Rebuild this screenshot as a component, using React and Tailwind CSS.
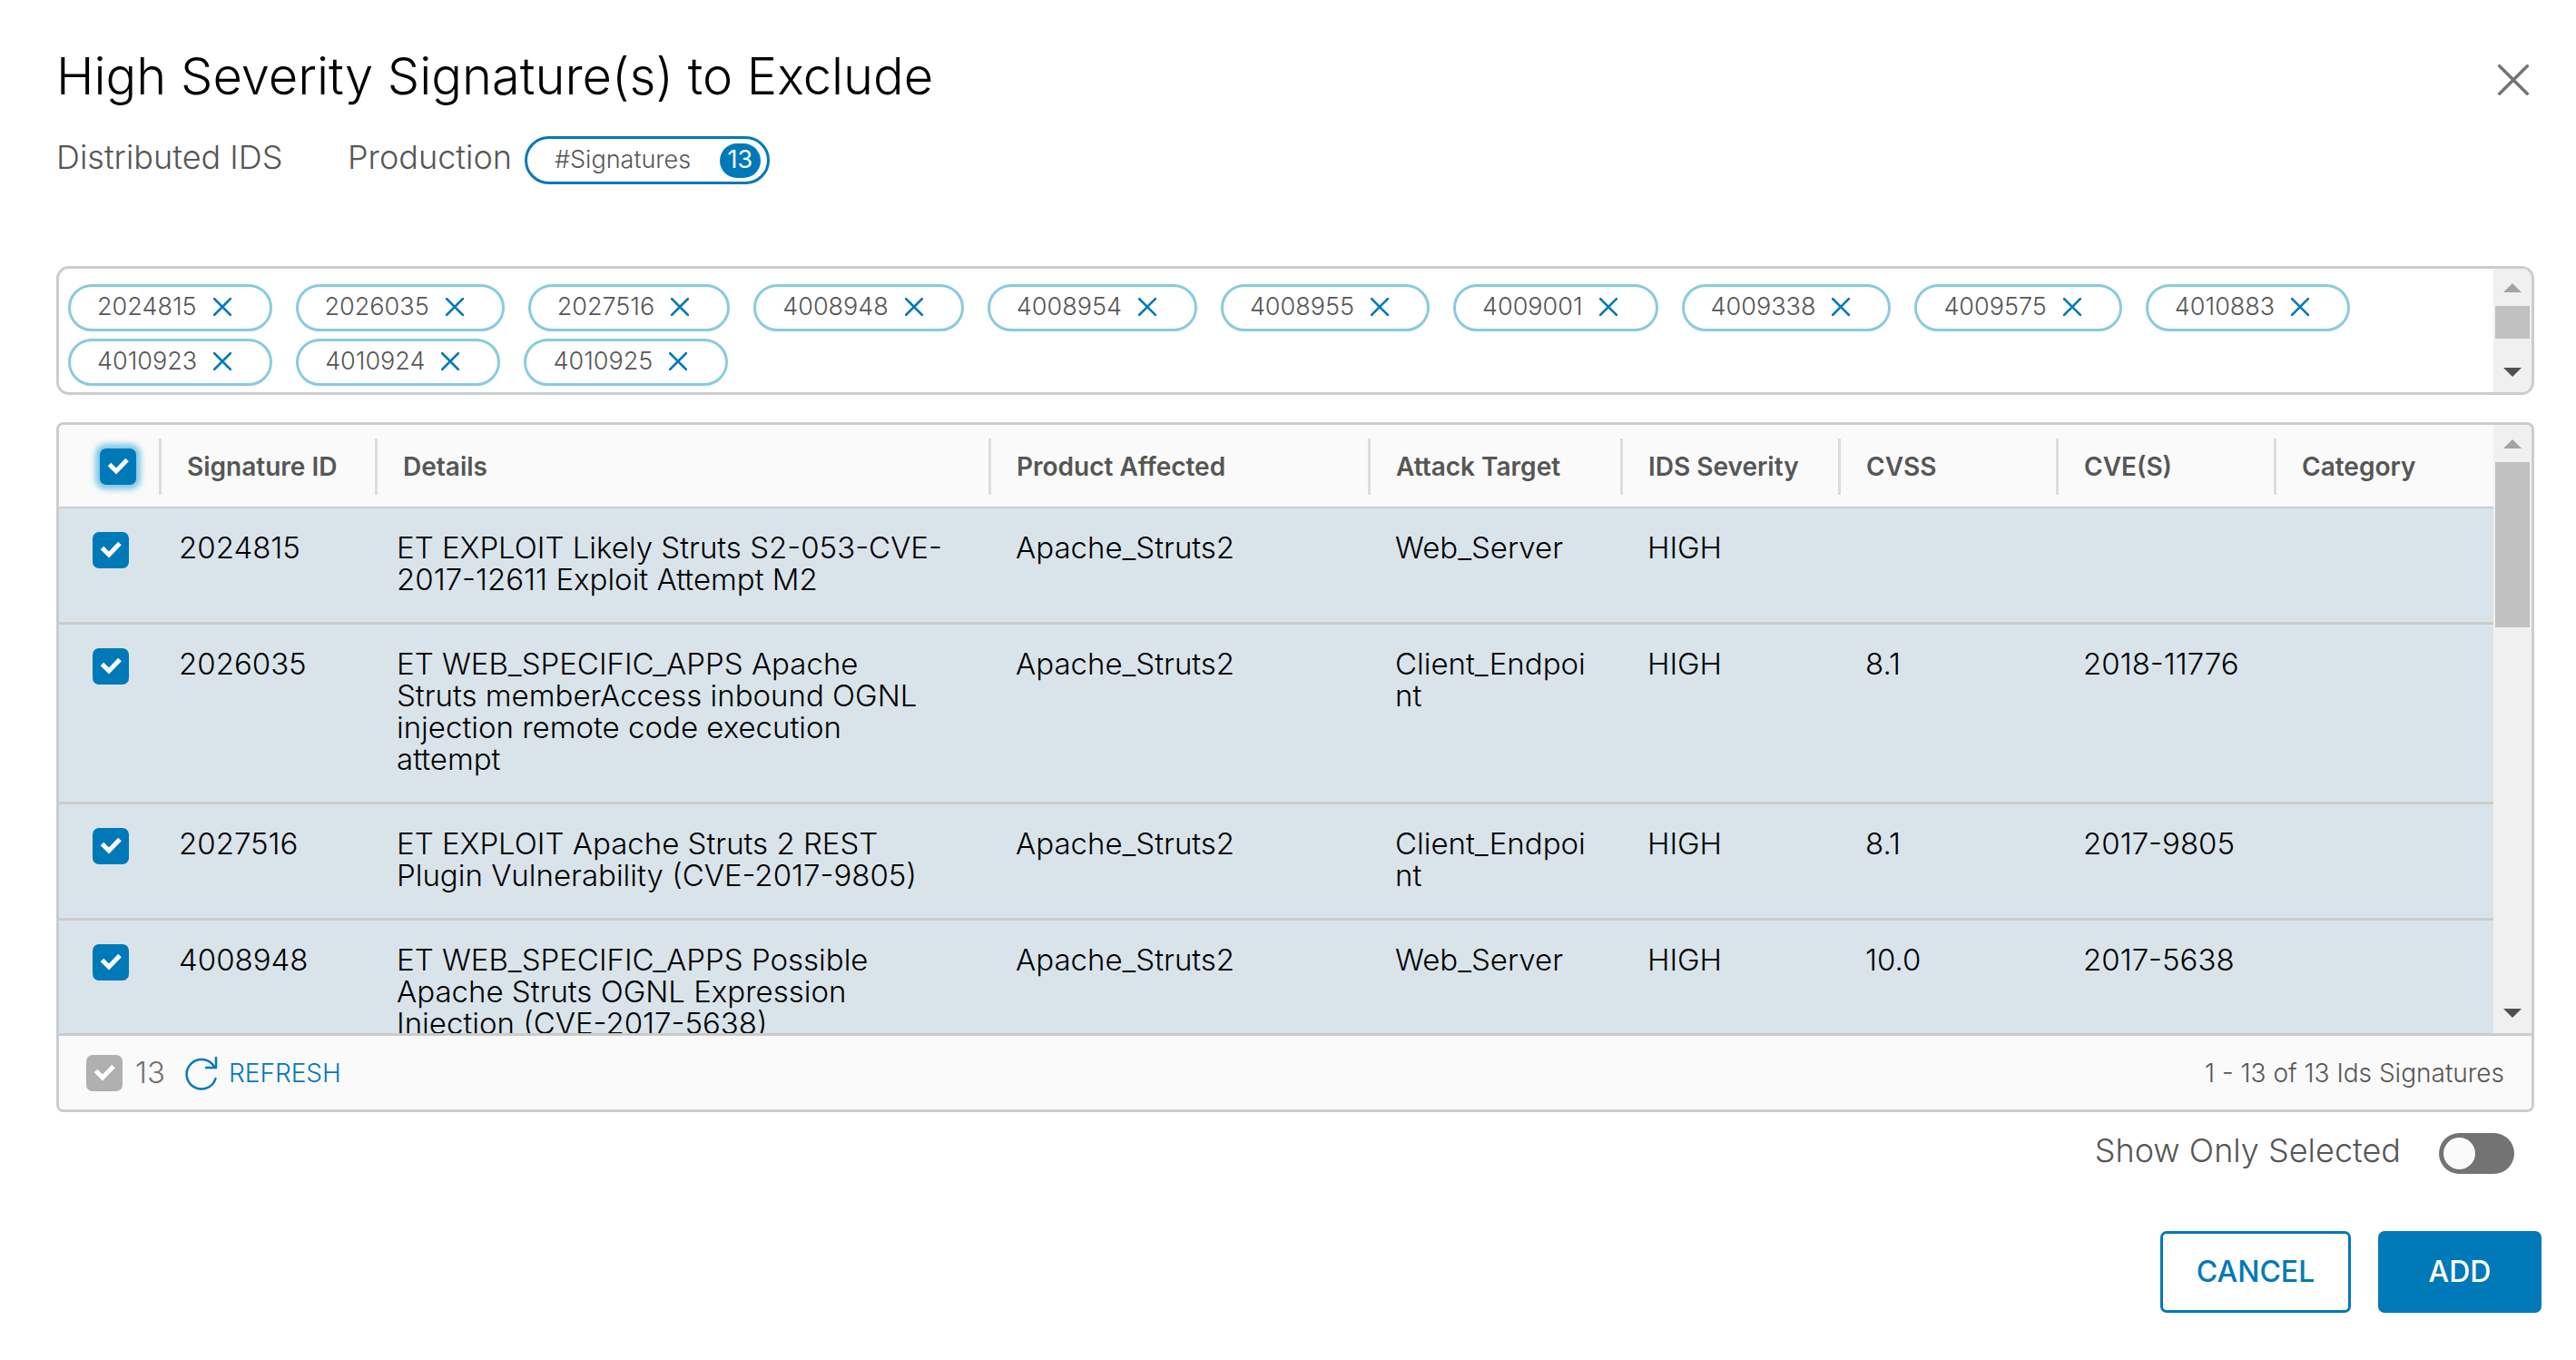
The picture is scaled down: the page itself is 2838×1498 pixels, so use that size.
import React from "react";

const chips = [
  "2024815", "2026035", "2027516", "4008948", "4008954", "4008955", "4009001",
  "4009338", "4009575", "4010883", "4010923", "4010924", "4010925",
];

const columns = [
  "Signature ID", "Details", "Product Affected", "Attack Target",
  "IDS Severity", "CVSS", "CVE(S)", "Category",
];

const rows = [
  {
    id: "2024815",
    details: "ET EXPLOIT Likely Struts S2-053-CVE-\n2017-12611 Exploit Attempt M2",
    product: "Apache_Struts2", target: "Web_Server", severity: "HIGH", cvss: "", cve: "",
  },
  {
    id: "2026035",
    details: "ET WEB_SPECIFIC_APPS Apache\nStruts memberAccess inbound OGNL\ninjection remote code execution\nattempt",
    product: "Apache_Struts2", target: "Client_Endpoi\nnt", severity: "HIGH", cvss: "8.1", cve: "2018-11776",
  },
  {
    id: "2027516",
    details: "ET EXPLOIT Apache Struts 2 REST\nPlugin Vulnerability (CVE-2017-9805)",
    product: "Apache_Struts2", target: "Client_Endpoi\nnt", severity: "HIGH", cvss: "8.1", cve: "2017-9805",
  },
  {
    id: "4008948",
    details: "ET WEB_SPECIFIC_APPS Possible\nApache Struts OGNL Expression\nInjection (CVE-2017-5638)",
    product: "Apache_Struts2", target: "Web_Server", severity: "HIGH", cvss: "10.0", cve: "2017-5638",
  },
];

function Cross({ className, strokeWidth }) {
  return (
    <svg viewBox="0 0 20 20" className={className} fill="none" stroke="currentColor" strokeWidth={strokeWidth} strokeLinecap="round" aria-hidden="true">
      <path d="M1 1 19 19M19 1 1 19" />
    </svg>
  );
}

function Checkbox({ label, focused, disabled }) {
  return (
    <span className="relative block size-10">
      <input
        type="checkbox"
        defaultChecked
        disabled={disabled}
        aria-label={label}
        className={
          "block size-10 appearance-none rounded-[7px] " +
          (disabled ? "bg-[#b0b0b0]" : "bg-[#0079b8]") +
          (focused ? " shadow-[0_0_6px_5px_#7cc6e6]" : "")
        }
      />
      <svg viewBox="0 0 40 40" className="pointer-events-none absolute inset-0 size-10" fill="none" stroke="#fff" strokeWidth="5" aria-hidden="true">
        <path d="M10.500 17.500 18 25 30 12.500" />
      </svg>
    </span>
  );
}

function Scrollbar({ thumb }) {
  return (
    <div className="flex w-[42px] shrink-0 flex-col items-center bg-[#f0f0f0]" aria-hidden="true">
      <div className="flex h-[41px] items-center justify-center">
        <svg viewBox="0 0 20 10" className="h-[10px] w-5 fill-[#a3a3a3]"><path d="M0 10 10 0 20 10z" /></svg>
      </div>
      <div className={"w-[38px] bg-[#c1c1c1] " + thumb} />
      <div className="mt-auto flex h-[45px] items-center justify-center">
        <svg viewBox="0 0 20 10" className="h-[10px] w-5 fill-[#505050]"><path d="M0 0 10 10 20 0z" /></svg>
      </div>
    </div>
  );
}

export default function App() {
  return (
    <main className="min-h-screen bg-white pt-[51px] pr-[38px] pb-12 pl-[62px] font-['Inter',sans-serif] text-[#565656]">
      <header className="flex items-start justify-between pr-[14px]">
        <h1 className="text-[56px] leading-[66px] font-light text-black">High Severity Signature(s) to Exclude</h1>
        <button type="button" aria-label="Close" className="mt-5 text-[#737373]">
          <Cross className="size-[34px]" strokeWidth="2" />
        </button>
      </header>

      <div className="mt-[33px] flex h-[53px] items-center text-[36px] font-light">
        <span className="w-[321px] pb-2">Distributed IDS</span>
        <span className="mr-[14px] pb-2">Production</span>
        <span className="flex h-[53px] w-[270px] items-center justify-between rounded-full border-3 border-[#0079b8] pr-[7px] pl-[30px] text-[27px]">
          #Signatures
          <span className="flex h-[38px] w-[45px] items-center justify-center rounded-full bg-[#0079b8] font-normal text-white">13</span>
        </span>
      </div>

      <section aria-label="Selected signatures" className="mt-[90px] mr-2 flex h-[142px] overflow-hidden rounded-[14px] border-3 border-[#cccccc]">
        <ul className="flex min-w-0 flex-1 flex-wrap content-start gap-x-[26px] gap-y-2 px-[10px] pt-[17px]">
          {chips.map((chip) => (
            <li key={chip} className="flex h-[52px] items-center rounded-full border-3 border-[#89cbdf] pr-[42px] pb-[2px] pl-[29px] text-[27px] font-light">
              {chip}
              <button type="button" aria-label={"Remove " + chip} className="ml-[18px] text-[#0079b8]">
                <Cross className="size-5" strokeWidth="2.500" />
              </button>
            </li>
          ))}
        </ul>
        <Scrollbar thumb="h-9" />
      </section>

      <section aria-label="Signatures" className="mt-[30px] mr-2 overflow-hidden rounded-lg border-3 border-[#cccccc]">
        <div className="flex h-[670px] overflow-hidden">
          <div className="min-w-0 flex-1 overflow-hidden">
            <table className="w-full table-fixed border-collapse text-left">
              <colgroup>
                <col className="w-[110px]" />
                <col className="w-[238px]" />
                <col />
                <col className="w-[418px]" />
                <col className="w-[278px]" />
                <col className="w-[240px]" />
                <col className="w-[240px]" />
                <col className="w-[240px]" />
                <col className="w-[242px]" />
              </colgroup>
              <thead className="bg-[#fafafa] text-[28px] leading-[62px]">
                <tr className="h-[92px] shadow-[inset_0_-2px_0_#cccccc]">
                  <th className="py-[15px] pl-[45px]">
                    <Checkbox label="Select all" focused />
                  </th>
                  {columns.map((c) => (
                    <th key={c} className="font-semibold">
                      <div className="border-l-3 border-[#dddddd] pl-7 whitespace-nowrap">{c}</div>
                    </th>
                  ))}
                </tr>
              </thead>
              <tbody className="bg-[#d9e4ea] align-top text-[33px] leading-[35px] font-light text-black">
                {rows.map((r) => (
                  <tr key={r.id} className="shadow-[inset_0_-3px_0_#cccccc] *:pt-[26px] *:pb-8 *:whitespace-pre">
                    <td className="pl-[37px]"><Checkbox label={"Select " + r.id} /></td>
                    <td className="pl-[22px]">{r.id}</td>
                    <td className="pl-6">{r.details}</td>
                    <td className="pl-[30px]">{r.product}</td>
                    <td className="pl-[30px]">{r.target}</td>
                    <td className="pl-[30px]">{r.severity}</td>
                    <td className="pl-[30px]">{r.cvss}</td>
                    <td className="pl-[30px]">{r.cve}</td>
                    <td />
                  </tr>
                ))}
              </tbody>
            </table>
          </div>
          <Scrollbar thumb="h-[182px]" />
        </div>
        <footer className="flex h-[84px] items-center border-t-3 border-[#cccccc] bg-[#fafafa] pr-[30px] pl-[30px] text-[28px] font-light">
          <Checkbox label="Selected count" disabled />
          <span className="ml-[14px] text-[33px] text-[#737373]">13</span>
          <button type="button" className="ml-[22px] flex items-center gap-3 text-[#0079b8]">
            <svg viewBox="0 0 36 38" className="h-[38px] w-9" fill="none" stroke="currentColor" strokeWidth="2.500" strokeLinecap="round" strokeLinejoin="round" aria-hidden="true">
              <path d="M33.500 25a16.300 16.300 0 1 1-1.500-13M34 2v11H23" />
            </svg>
            REFRESH
          </button>
          <span className="ml-auto">1 - 13 of 13 Ids Signatures</span>
        </footer>
      </section>

      <label className="mt-[23px] mr-[30px] flex items-center justify-end gap-[42px] text-[36px] leading-[39px] font-light">
        <span className="pb-[6px]">Show Only Selected</span>
        <input
          type="checkbox"
          role="switch"
          className="flex h-[45px] w-[83px] appearance-none items-center rounded-full bg-[#737373] px-[5px] before:block before:size-[35px] before:rounded-full before:bg-[#fafafa] checked:justify-end"
        />
      </label>

      <div className="mt-[63px] flex justify-end gap-[30px] text-[32px] font-medium">
        <button type="button" className="h-[90px] w-[210px] rounded-[7px] border-3 border-[#0079b8] text-[#0079b8]">CANCEL</button>
        <button type="button" className="h-[90px] w-[180px] rounded-[7px] bg-[#0079b8] text-white">ADD</button>
      </div>
    </main>
  );
}
